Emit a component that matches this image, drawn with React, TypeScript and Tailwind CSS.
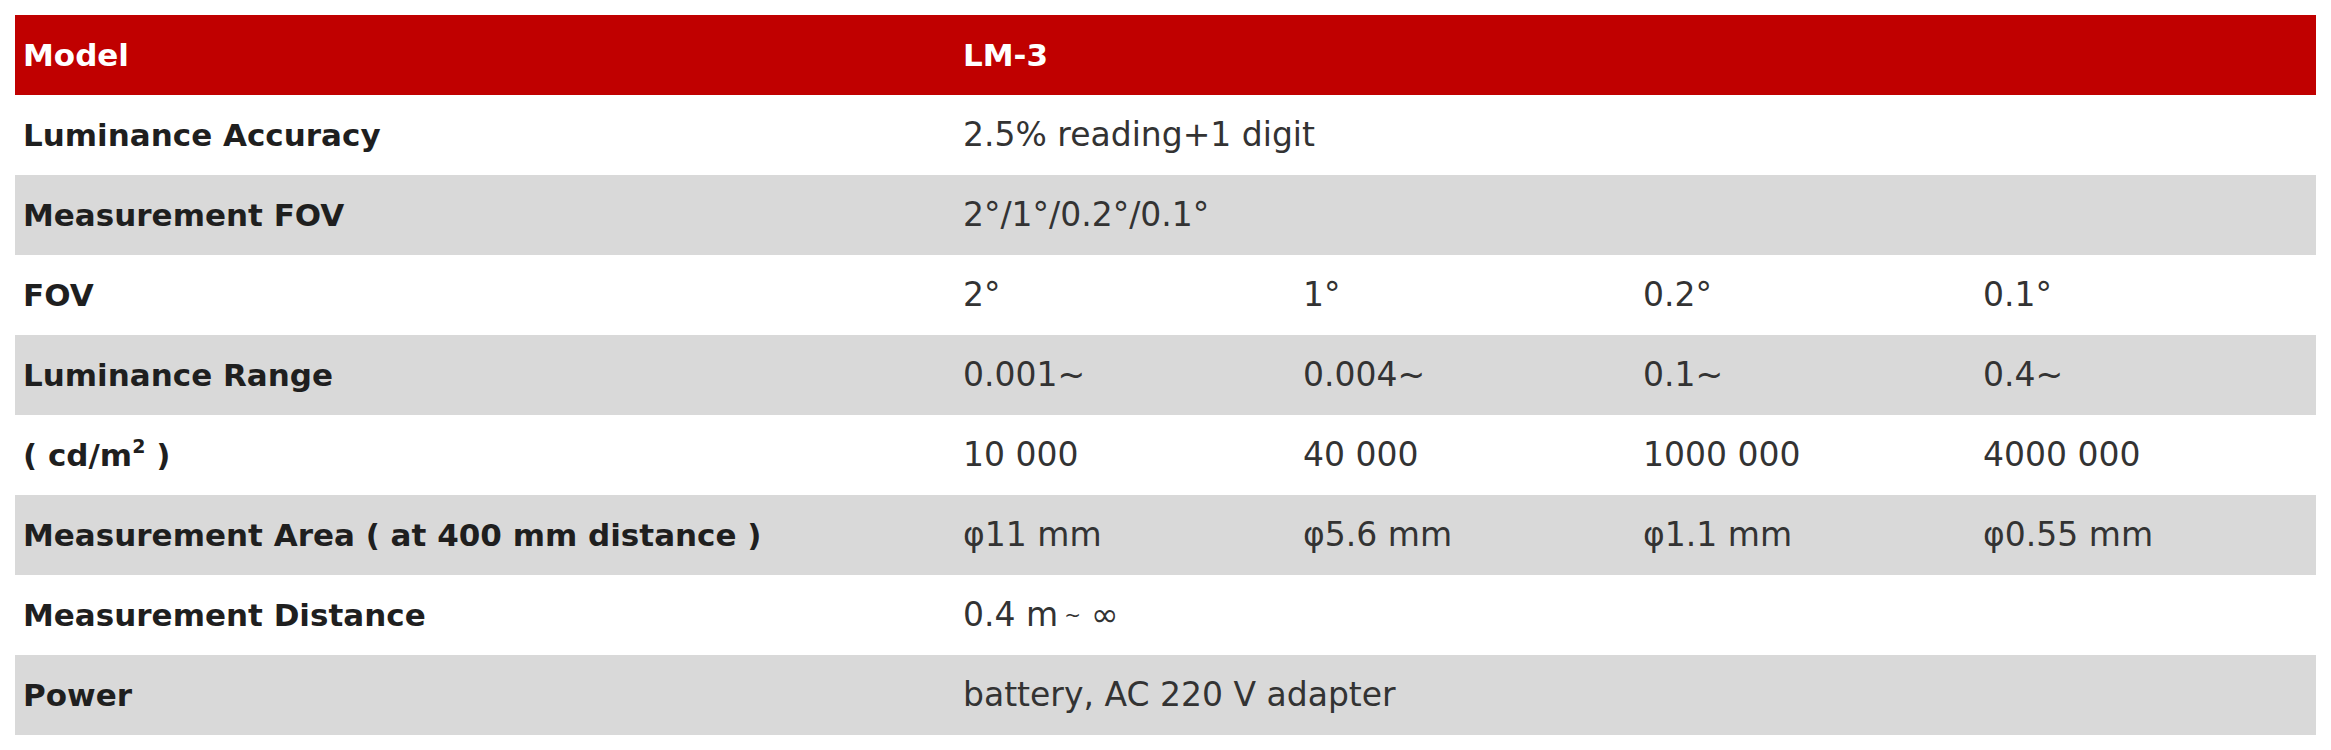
import React from "react";

type Row = { label: React.ReactNode; values: React.ReactNode[]; gray: boolean };

const rows: Row[] = [
  { label: "Luminance Accuracy", values: ["2.5% reading+1 digit"], gray: false },
  { label: "Measurement FOV", values: ["2°/1°/0.2°/0.1°"], gray: true },
  { label: "FOV", values: ["2°", "1°", "0.2°", "0.1°"], gray: false },
  { label: "Luminance Range", values: ["0.001~", "0.004~", "0.1~", "0.4~"], gray: true },
  {
    label: (
      <>
        ( cd/m<sup className="text-[19px] relative -top-[13px]">2</sup> )
      </>
    ),
    values: ["10 000", "40 000", "1000 000", "4000 000"],
    gray: false,
  },
  {
    label: "Measurement Area ( at 400 mm distance )",
    values: ["φ11 mm", "φ5.6 mm", "φ1.1 mm", "φ0.55 mm"],
    gray: true,
  },
  {
    label: "Measurement Distance",
    values: [
      <>
        0.4 m<span className="text-[20px] ml-[6px] mr-[10px] relative -top-[4px]">~</span>∞
      </>,
    ],
    gray: false,
  },
  { label: "Power", values: ["battery, AC 220 V adapter"], gray: true },
];

export default function App() {
  return (
    <div
      className="w-[2331px] h-[750px] bg-white pt-[15px] pl-[15px]"
      style={{ fontFamily: '"DejaVu Sans", Verdana, sans-serif' }}
    >
      <div className="w-[2301px] flex flex-col">
        <div className="grid grid-cols-[940px_1361px] h-[80px] bg-[#c00000] text-white font-bold text-[31px] items-center">
          <div className="pl-[8px]">Model</div>
          <div className="pl-[8px]">LM-3</div>
        </div>
        {rows.map((r, i) => (
          <div
            key={i}
            className={
              "grid grid-cols-[940px_340px_340px_340px_341px] h-[80px] items-center " +
              (r.gray ? "bg-[#d9d9d9]" : "bg-white")
            }
          >
            <div className="pl-[8px] font-bold text-[31px] text-[#1f1f1f] whitespace-nowrap">{r.label}</div>
            {r.values.length === 1 ? (
              <div className="col-span-4 pl-[8px] text-[33px] text-[#333333] whitespace-nowrap">{r.values[0]}</div>
            ) : (
              r.values.map((v, j) => (
                <div key={j} className="pl-[8px] text-[33px] text-[#333333] whitespace-nowrap">
                  {v}
                </div>
              ))
            )}
          </div>
        ))}
      </div>
    </div>
  );
}
